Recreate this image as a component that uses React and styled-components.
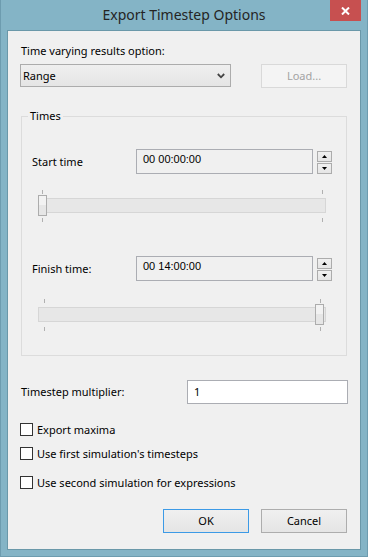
import React from "react";
import styled, { createGlobalStyle } from "styled-components";

const GlobalStyle = createGlobalStyle`
  html, body {
    margin: 0;
    padding: 0;
    background: #85b5c7;
  }
  * { box-sizing: border-box; }
`;

const Window = styled.div`
  width: 368px;
  height: 557px;
  background: #84b4c6;
  border: 1px solid #6d9caf;
  border-top: none;
  display: flex;
  flex-direction: column;
  font-family: "Noto Sans", "Open Sans", sans-serif;
  font-size: 11px;
  color: #000;
`;

const TitleBar = styled.div`
  height: 30px;
  display: grid;
  grid-template-columns: 1fr auto 1fr;
  align-items: start;
`;

const Title = styled.div`
  grid-column: 2;
  padding-top: 6px;
  font-size: 14px;
  line-height: 18px;
  color: #242424;
`;

const CloseButton = styled.div`
  grid-column: 3;
  justify-self: end;
  margin-right: 6px;
  width: 31px;
  height: 21px;
  background: #c75050;
  display: flex;
  align-items: center;
  justify-content: center;
`;

const Client = styled.div`
  margin: 0 6px 6px;
  height: 520px;
  background: #f0f0f0;
  border: 1px solid #6a98a9;
  padding: 12px 13px 0 12px;
  display: flex;
  flex-direction: column;
`;

const Label = styled.div`
  line-height: 16px;
  padding-left: ${(p) => p.$indent || 0}px;
  white-space: nowrap;
`;

const TopRow = styled.div`
  margin-top: 5px;
  display: flex;
  justify-content: space-between;
  align-items: flex-start;
`;

const Combo = styled.div`
  width: 211px;
  height: 23px;
  border: 1px solid #acacac;
  background: linear-gradient(#efefef, #e5e5e5);
  display: flex;
  align-items: center;
  justify-content: space-between;
  padding: 0 5px 0 2px;
`;

const Button = styled.div`
  width: 86px;
  height: 24px;
  border: 1px solid ${(p) => (p.$default ? "#3c9ae6" : p.$disabled ? "#d9d9d9" : "#adadad")};
  background: ${(p) => (p.$disabled ? "#f4f4f4" : "linear-gradient(#f0f0f0, #e5e5e5)")};
  color: ${(p) => (p.$disabled ? "#a3a3a3" : "#000")};
  display: flex;
  align-items: center;
  justify-content: center;
  line-height: 16px;
`;

const Group = styled.fieldset`
  margin: 20px 0 0 1px;
  width: 326px;
  border: 1px solid #dcdcdc;
  padding: 25px 10px 23px 10px;
  min-width: 0;
`;

const Legend = styled.legend`
  padding: 0 2px;
  margin-left: -4px;
  line-height: 16px;
`;

const FieldRow = styled.div`
  display: grid;
  grid-template-columns: 100px 177px 15px;
  column-gap: 4px;
  align-items: center;
  margin-top: ${(p) => p.$top || 0}px;
`;

const TimeBox = styled.div`
  height: 25px;
  border: 1px solid #abadb3;
  background: #f0f0f0;
  font-family: "Liberation Sans", Arial, sans-serif;
  font-size: 11px;
  padding: 3px 0 0 6px;
  line-height: 13px;
`;

const Spinner = styled.div`
  display: flex;
  flex-direction: column;
  gap: 1px;
  align-self: end;
`;

const SpinButton = styled.div`
  height: 11px;
  border: 1px solid #acacac;
  background: linear-gradient(#f0f0f0, #e5e5e5);
  display: flex;
  align-items: center;
  justify-content: center;
`;

const Slider = styled.div`
  position: relative;
  margin: ${(p) => p.$top}px 0 0 5px;
  width: 290px;
  height: 33px;
`;

const Track = styled.div`
  position: absolute;
  left: 1px;
  right: 1px;
  top: 8px;
  height: 15px;
  background: #e7e7e7;
  border: 1px solid #d6d6d6;
`;

const Tick = styled.div`
  position: absolute;
  left: ${(p) => p.$x}px;
  top: ${(p) => p.$y}px;
  width: 1px;
  height: 4px;
  background: #b0b0b0;
`;

const Thumb = styled.div`
  position: absolute;
  left: ${(p) => p.$x}px;
  top: 5px;
  width: 9px;
  height: 21px;
  border: 1px solid #acacac;
  background: linear-gradient(#f2f2f2 50%, #e6e6e6 50%);
`;

const MultiplierRow = styled.div`
  margin: 24px 0 0 1px;
  display: flex;
  justify-content: space-between;
  align-items: center;
`;

const TextInput = styled.div`
  width: 161px;
  height: 24px;
  border: 1px solid #abadb3;
  background: #fff;
  padding: 3px 0 0 6px;
  line-height: 16px;
  margin-right: -1px;
`;

const CheckRow = styled.label`
  display: flex;
  align-items: center;
  gap: 4px;
  height: 13px;
  margin-top: ${(p) => p.$top}px;
  line-height: 16px;
`;

const Box = styled.span`
  width: 13px;
  height: 13px;
  border: 1px solid #333;
  background: #fff;
  flex: none;
`;

const ButtonRow = styled.div`
  margin-top: 20px;
  display: flex;
  justify-content: flex-end;
  gap: 12px;
`;

const Chevron = () => (
  <svg width="8" height="6" viewBox="0 0 8 6">
    <path d="M0.8 1 L4 4.3 L7.2 1" fill="none" stroke="#444" strokeWidth="1.8" />
  </svg>
);

const Arrow = ({ up }) => (
  <svg width="5" height="3" viewBox="0 0 5 3">
    <path d={up ? "M0 3 L2.5 0 L5 3 Z" : "M0 0 L5 0 L2.5 3 Z"} fill="#000" />
  </svg>
);

const TimeField = ({ label, value, top }) => (
  <FieldRow $top={top}>
    <Label>{label}</Label>
    <TimeBox>{value}</TimeBox>
    <Spinner>
      <SpinButton><Arrow up /></SpinButton>
      <SpinButton><Arrow /></SpinButton>
    </Spinner>
  </FieldRow>
);

const TimeSlider = ({ top, at }) => (
  <Slider $top={top}>
    <Tick $x={at === "end" ? 7 : 5} $y={0} />
    <Tick $x={at === "end" ? 283 : 285} $y={0} />
    <Track />
    <Tick $x={at === "end" ? 7 : 5} $y={28} />
    <Tick $x={at === "end" ? 283 : 285} $y={28} />
    <Thumb $x={at === "end" ? 278 : 1} />
  </Slider>
);

const Check = ({ label, top }) => (
  <CheckRow $top={top}>
    <Box />
    {label}
  </CheckRow>
);

export default function App() {
  return (
    <>
      <GlobalStyle />
      <Window>
        <TitleBar>
          <Title>Export Timestep Options</Title>
          <CloseButton>
            <svg width="9" height="8" viewBox="0 0 9 8">
              <path d="M1 0.5 L8 7.5 M8 0.5 L1 7.5" stroke="#fff" strokeWidth="2" />
            </svg>
          </CloseButton>
        </TitleBar>
        <Client>
          <Label $indent={1}>Time varying results option:</Label>
          <TopRow>
            <Combo>
              <span>Range</span>
              <Chevron />
            </Combo>
            <Button $disabled>Load...</Button>
          </TopRow>
          <Group>
            <Legend>Times</Legend>
            <TimeField label="Start time" value="00 00:00:00" />
            <TimeSlider top={16} at="start" />
            <TimeField label="Finish time:" value="00 14:00:00" top={33} />
            <TimeSlider top={18} at="end" />
          </Group>
          <MultiplierRow>
            <Label>Timestep multiplier:</Label>
            <TextInput>1</TextInput>
          </MultiplierRow>
          <Check label="Export maxima" top={19} />
          <Check label="Use first simulation's timesteps" top={11} />
          <Check label="Use second simulation for expressions" top={16} />
          <ButtonRow>
            <Button $default>OK</Button>
            <Button>Cancel</Button>
          </ButtonRow>
        </Client>
      </Window>
    </>
  );
}
